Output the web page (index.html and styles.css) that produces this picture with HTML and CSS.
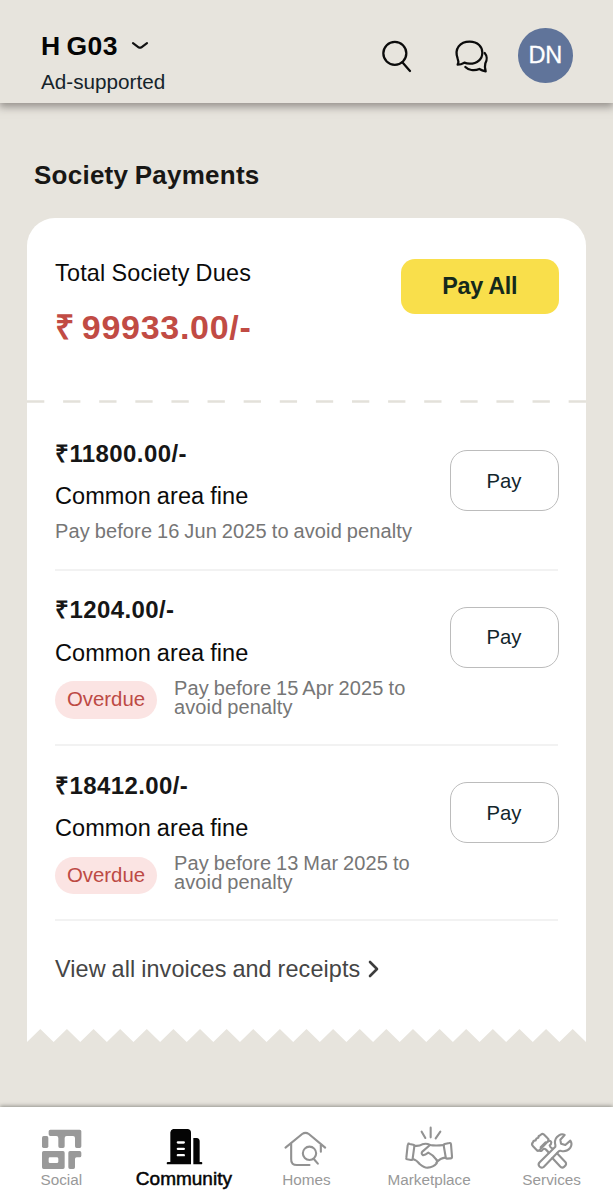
FILE: index.html
```html
<!DOCTYPE html>
<html lang="en">
<head>
<meta charset="utf-8">
<title>Society Payments</title>
<link rel="stylesheet" href="styles.css">
</head>
<body>
<div class="app">
  <header class="header">
    <div class="account">
      <div class="unit"><span>H G03</span>
        <svg class="caret" viewBox="0 0 18 10"><path d="M2 2.2 7.6 6.3Q9 7.2 10.4 6.3L16 2.2"/></svg>
      </div>
      <div class="plan">Ad-supported</div>
    </div>
    <div class="actions">
      <svg class="action" viewBox="114 108 108 108"><circle cx="161.5" cy="157" r="34.5"/><path d="M184 184 207 210"/></svg>
      <svg class="action" viewBox="339 108 108 108"><path d="M350 191Q354 181 350 173C339 143 357 122 386 122C411 122 424 138 424 155C424 174 409 188 386 188Q377 188 370 185Q360 191 350 191Z"/><path d="M431 156C438 164 439 177 433 187Q430 198 434 211Q423 209 415 204C399 211 382 207 373 198"/></svg>
      <div class="avatar">DN</div>
    </div>
  </header>

  <main class="content">
    <h1 class="heading">Society Payments</h1>
    <section class="card">
      <div class="summary">
        <div>
          <div class="summary-label">Total Society Dues</div>
          <div class="summary-total">₹ 99933.00/-</div>
        </div>
        <button class="pay-all">Pay All</button>
      </div>
      <svg class="perforation" viewBox="0 0 559 3"><path d="M0 1.5H559"/></svg>
      <div class="dues">
        <article class="due due-single">
          <div>
            <div class="amount">₹11800.00/-</div>
            <div class="reason">Common area fine</div>
            <div class="deadline">Pay before 16 Jun 2025 to avoid penalty</div>
          </div>
          <button class="pay">Pay</button>
        </article>
        <article class="due">
          <div>
            <div class="amount">₹1204.00/-</div>
            <div class="reason">Common area fine</div>
            <div class="late"><span class="badge">Overdue</span><div class="deadline">Pay before 15 Apr 2025 to<br>avoid penalty</div></div>
          </div>
          <button class="pay">Pay</button>
        </article>
        <article class="due">
          <div>
            <div class="amount">₹18412.00/-</div>
            <div class="reason">Common area fine</div>
            <div class="late"><span class="badge">Overdue</span><div class="deadline">Pay before 13 Mar 2025 to<br>avoid penalty</div></div>
          </div>
          <button class="pay">Pay</button>
        </article>
        <a class="all-link"><span>View all invoices and receipts</span>
          <svg class="chevron" viewBox="0 0 12 18"><path d="M2 2 9 9 2 16"/></svg>
        </a>
      </div>
    </section>
    <svg class="torn" viewBox="0 0 42 1" preserveAspectRatio="none"><path d="M0 0V1L1 0 2 1 3 0 4 1 5 0 6 1 7 0 8 1 9 0 10 1 11 0 12 1 13 0 14 1 15 0 16 1 17 0 18 1 19 0 20 1 21 0 22 1 23 0 24 1 25 0 26 1 27 0 28 1 29 0 30 1 31 0 32 1 33 0 34 1 35 0 36 1 37 0 38 1 39 0 40 1 41 0 42 1V0Z"/></svg>
  </main>

  <nav class="nav">
    <a class="tab">
      <svg class="solid" viewBox="118 96 132 132">
        <rect x="127" y="123" width="19" height="36" rx="5"/>
        <path d="M152 104H240Q245 104 245 109V154Q245 159 240 159H231Q226 159 226 154V129Q226 123 220 123H201Q195 123 195 129V154Q195 159 190 159H181Q176 159 176 154V129Q176 123 170 123H152Q147 123 147 118V109Q147 104 152 104Z"/>
        <path fill-rule="evenodd" d="M132 168H190Q195 168 195 173V217Q195 222 190 222H132Q127 222 127 217V173Q127 168 132 168ZM151 187Q147 187 147 191V200Q147 204 151 204H171Q176 204 176 200V191Q176 187 171 187Z"/>
        <path d="M211 168H240Q245 168 245 173V182Q245 187 240 187H231Q226 187 226 192V217Q226 222 221 222H211Q206 222 206 217V173Q206 168 211 168Z"/>
      </svg>
      <span>Social</span>
    </a>
    <a class="tab active">
      <svg class="solid" viewBox="486 96 132 132">
        <path fill-rule="evenodd" d="M519 102H564Q573 104 573 113V208H504Q500 208 500 204.500T504 201H511V112Q512 104 519 102ZM534 139Q530 139 530 142.500T534 146H551Q555 146 555 142.500T551 139ZM534 158Q530 158 530 161.500T534 165H551Q555 165 555 161.500T551 158ZM534 177Q530 177 530 180.500T534 184H551Q555 184 555 180.500T551 177Z"/>
        <path d="M580 129H590Q599 130 599 139V201H604Q607 201 607 204.500T603 208H580Z"/>
      </svg>
      <span>Community</span>
    </a>
    <a class="tab">
      <svg class="line" viewBox="103.500 96 132 132">
        <path d="M108 158 158 117Q168 110 178 117L227 158"/>
        <path d="M125 146V192Q124 211 144 210H180"/>
        <path d="M214 151V170"/>
        <circle cx="180" cy="175" r="20"/><path d="M193 192 205 206"/>
      </svg>
      <span>Homes</span>
    </a>
    <a class="tab">
      <svg class="line" viewBox="473 96 132 132">
        <path d="M517 110 528 129M544 98V127M573 110 559 130"/>
        <path d="M477 146 492 149Q496 150 495 154L490 191Q489 196 485 195L474 193Q470 192 471 188L475 151Q476 146 479 146Z"/>
        <path d="M586 147 600 144Q604 143 605 148L608 185Q608 190 604 190L593 191Q589 191 589 186L583 151Q583 148 586 147Z"/>
        <path d="M495 152Q509 154 519 148Q531 144 542 150Q558 153 584 150"/>
        <path d="M542 150 520 169Q514 175 520 180Q525 182 537 173Q550 179 561 194"/>
        <path d="M490 192Q502 195 511 207Q525 219 535 218Q552 217 562 205Q565 197 561 194M561 203Q573 189 588 188"/>
      </svg>
      <span>Marketplace</span>
    </a>
    <a class="tab">
      <svg class="line" viewBox="211 321 132 132">
        <path d="M220 367Q214 373 220 379L231 390Q235 395 240 390L265 364Q269 359 264 355L252 343Q246 339 242 346Q236 347 236 353Q229 354 228 361Q221 361 220 367Z"/>
        <path d="M239 391Q246 396 249 389Q253 384 258 388Q263 392 267 398M266 364Q273 361 275 367Q275 373 270 376Q271 382 279 386M243 382 258 367"/>
        <path d="M240 427 287 380Q288 376 286 370Q284 355 298 346Q307 340 315 345L302 359 304 371 317 375 332 362Q339 372 332 383Q323 396 305 393Q300 391 296 395L252 441Q245 446 239 439Q234 433 240 427Z"/>
        <path d="M278 414 301 439Q307 446 314 440Q323 433 317 426L292 400"/>
      </svg>
      <span>Services</span>
    </a>
  </nav>
</div>
</body>
</html>
```
FILE: styles.css
```css
* { box-sizing: border-box; }
body {
  margin: 0;
  background: #e7e4dd;
  font-family: "Liberation Sans", Arial, sans-serif;
  color: #0b0b0b;
}
button {
  font-family: inherit;
  padding: 0;
  border: 0;
  flex: none;
}
svg { display: block; flex: none; fill: none; overflow: visible; stroke-linecap: round; stroke-linejoin: round; }

.app { width: 613px; height: 1200px; display: flex; flex-direction: column; overflow: hidden; }

.header {
  height: 103px;
  flex: none;
  padding: 28px 40.5px 0 41px;
  display: flex;
  justify-content: space-between;
  align-items: flex-start;
  box-shadow: 0 3px 8px 1px rgba(70, 64, 62, .5);
}
.account { padding-top: 3px; }
.unit {
  display: flex;
  align-items: center;
  gap: 13px;
  height: 30px;
  font-size: 26.5px;
  font-weight: 700;
  letter-spacing: .5px;
  word-spacing: -2px;
  line-height: 30px;
  color: #050505;
}
.caret { width: 18px; height: 10px; stroke: #111; stroke-width: 2.2; }
.plan { margin-top: 9px; line-height: 24px; font-size: 20.7px; color: #15232a; }
.actions { display: flex; align-items: center; }
.action { width: 36px; height: 36px; margin-right: 39px; stroke: #0b0b0b; stroke-width: 6.8; }
.action + .action { margin-right: 28.500px; }
.avatar {
  width: 54.500px;
  height: 54.500px;
  border-radius: 50%;
  background: #60749a;
  color: #fff;
  font-size: 23.5px;
  line-height: 55px;
  text-align: center;
  letter-spacing: -.2px;
  -webkit-text-stroke: .3px #fff;
}

.content { flex: 1; padding: 57px 27px 0; }
.heading {
  margin: 0 0 28px 7px;
  font-size: 26px;
  line-height: 30px;
  letter-spacing: .25px;
  word-spacing: -1px;
  color: #181715;
}
.card { height: 811px; background: #fff; border-radius: 28px 28px 0 0; }
.summary {
  height: 182px;
  padding: 41px 27.500px 0 28px;
  display: flex;
  justify-content: space-between;
  align-items: flex-start;
}
.summary-label { font-size: 23.4px; line-height: 28px; letter-spacing: .22px; word-spacing: -.8px; }
.summary-total {
  margin-top: 20px;
  font-size: 34px;
  line-height: 40px;
  font-weight: 700;
  letter-spacing: .7px;
  word-spacing: -3px;
  color: #c14b44;
}
.pay-all {
  width: 157.500px;
  height: 54.500px;
  padding-top: 1px;
  border-radius: 14px;
  background: #f9df4b;
  color: #14291c;
  font-size: 23.4px;
  font-weight: 700;
  letter-spacing: -.3px;
}
.perforation { width: 559px; height: 3px; }
.perforation path { stroke: #e3e1da; stroke-width: 2.4; stroke-dasharray: 17.3 18.81; stroke-linecap: butt; }

.dues { padding: 12px 28px 0; }
.due {
  height: 175.300px;
  padding-top: 25.700px;
  display: flex;
  justify-content: space-between;
  align-items: flex-start;
  border-bottom: 2px solid #f2f2f2;
}
.due-single { height: 155.700px; padding-top: 24.500px; }
.amount { font-size: 24px; line-height: 28px; font-weight: 700; letter-spacing: .4px; color: #161616; }
.reason { margin-top: 14.500px; font-size: 23.5px; line-height: 28px; letter-spacing: .08px; word-spacing: -.6px; }
.deadline { font-size: 20px; line-height: 19.2px; color: #767676; letter-spacing: .12px; word-spacing: -.8px; }
.due-single .deadline { margin-top: 12px; }
.late { display: flex; align-items: flex-start; gap: 17px; margin-top: 12px; }
.badge {
  width: 102px;
  height: 37.5px;
  margin-top: 2.500px;
  border-radius: 19px;
  background: #fbe4e3;
  color: #bd4a45;
  font-size: 20.4px;
  line-height: 37px;
  text-align: center;
}
.pay {
  width: 109px;
  height: 61px;
  margin: 10.500px -.5px 0 0;
  padding-top: 1px;
  border: 1.500px solid #bcbcbc;
  border-radius: 17px;
  background: #fff;
  color: #12262c;
  font-size: 20.3px;
}
.all-link {
  display: flex;
  align-items: center;
  gap: 8px;
  margin-top: 34px;
  font-size: 23.4px;
  line-height: 28px;
  letter-spacing: .1px;
  word-spacing: -.7px;
  color: #454545;
}
.chevron { width: 12px; height: 18px; stroke: #3d3d3d; stroke-width: 2.6; }
.torn { width: 559px; height: 13px; fill: #fff; }

.nav {
  height: 93px;
  flex: none;
  padding-top: 20px;
  display: grid;
  grid-template-columns: repeat(5, 1fr);
  background: #fff;
  box-shadow: 0 -1px 4px rgba(60, 62, 55, .5);
}
.tab { display: flex; flex-direction: column; align-items: center; font-size: 15.3px; line-height: 18px; color: #999; }
.tab svg { width: 44px; height: 44px; }
.solid { fill: #999; }
.line { stroke: #929292; stroke-width: 6.3; }
.active { font-size: 19px; line-height: 16.500px; color: #050505; -webkit-text-stroke: .5px #050505; }
.active .solid { fill: #050505; }
```
